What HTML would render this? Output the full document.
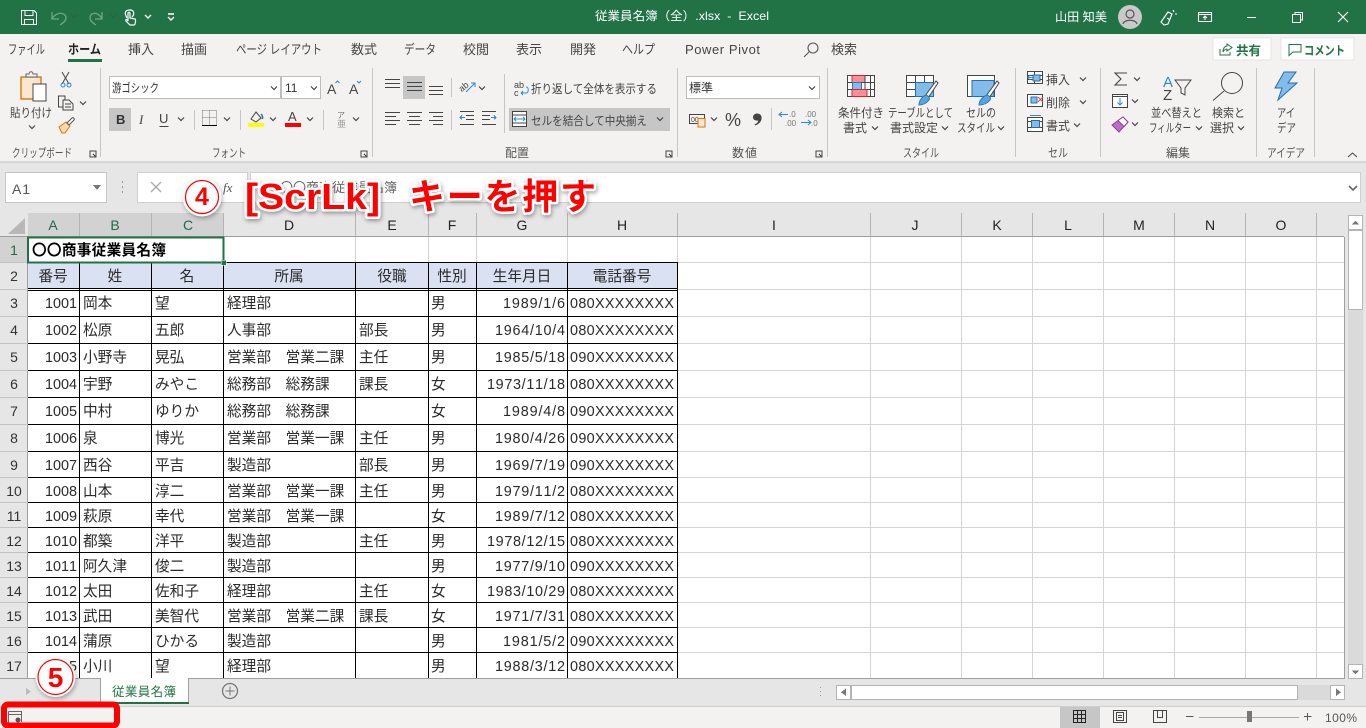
<!DOCTYPE html>
<html lang="ja"><head><meta charset="utf-8"><title>従業員名簿（全）.xlsx - Excel</title>
<style>
html,body{margin:0;padding:0;background:#fff;overflow:hidden}
svg{display:block}
text{font-family:"Liberation Sans","Noto Sans CJK JP",sans-serif;white-space:pre}
.r{font-size:12px;fill:#444}
.t{font-size:13px;fill:#444}
.g{font-size:12px;fill:#555}
.w{font-size:12px;fill:#fff}
.h{font-size:14px;fill:#222;text-anchor:middle}
.hs{font-size:14px;fill:#1f6b45;text-anchor:middle}
.n{font-size:14px;fill:#333;text-anchor:middle}
.c{font-size:14.67px;fill:#2a2a2a}
.p{font-size:14.4px;fill:#2a2a2a}
.m{font-size:14.67px;fill:#2a2a2a;text-anchor:middle}
.d{font-size:14.4px;fill:#2a2a2a;text-anchor:end;font-kerning:none}
.a{font-weight:700;fill:#f00;stroke:#fff;stroke-width:5px;paint-order:stroke;stroke-linejoin:round;filter:drop-shadow(1px 2px 2px rgba(0,0,0,.35))}
.s{fill:none;stroke:#444;stroke-width:1}
.gl{stroke:#d4d4d4;stroke-width:1}
.bl{stroke:#000;stroke-width:1}
.hd{stroke:#b4b4b4;stroke-width:1}
</style></head>
<body>
<svg xmlns="http://www.w3.org/2000/svg" width="1366" height="728" viewBox="0 0 1366 728" shape-rendering="crispEdges">
<defs>
<path id="c" d="M-3,-1.5L0,1.5L3,-1.5" fill="none" stroke="#444" stroke-width="1.2" shape-rendering="auto"/>
</defs>

<!-- backgrounds -->
<rect width="1366" height="728" fill="#e6e6e6"/>
<rect width="1366" height="34" fill="#217346"/>
<rect y="34" width="1366" height="127" fill="#f3f2f1"/>
<rect y="161" width="1366" height="2" fill="#d6d6d6"/>

<!-- title bar -->
<g fill="none" stroke="#fff" stroke-width="1.2">
<path d="M21.5,10.5H34L36.5,13V24.5H21.5Z"/><path d="M25,10.5V15.5H33V10.5M24.5,24.5V19.5H33.5V24.5"/>
</g>
<g fill="none" stroke="#6fa588" stroke-width="1.3" shape-rendering="auto">
<path d="M52,12V19H59M52,19C56,11 66,12 66,18C66,21 63,23 60,25"/>
<path d="M102,12V19H95M102,19C98,11 90,12 90,18C90,21 93,23 96,25"/>
</g>
<use href="#c" x="74" y="16" style="opacity:.4"/>
<use href="#c" x="113" y="16" style="opacity:.4"/>
<g fill="none" stroke="#fff" stroke-width="1.2" shape-rendering="auto">
<path d="M127,18C123,11 127,10 130,10C134,10 135,14 132,17"/>
<path d="M128,21V13.5C128,12 130,12 130,13.5V18L135,19C136,19 135.500,25 134,25H130L126,21C125,19 127,19 128,21Z"/>
<path d="M145,15L148,18L151,15M168,14H174M168,17L171,20L174,17" stroke-width="1.4"/>
</g>
<text class="w" x="595" y="20" textLength="174" lengthAdjust="spacingAndGlyphs">従業員名簿（全）.xlsx  -  Excel</text>
<text class="w" x="1055" y="21" textLength="52" lengthAdjust="spacingAndGlyphs">山田 知美</text>
<circle cx="1130" cy="17" r="12" fill="#c9c9c9" shape-rendering="auto"/>
<g fill="none" stroke="#555" stroke-width="1.2" shape-rendering="auto"><circle cx="1130" cy="14" r="4"/><path d="M1123,24C1124,19 1136,19 1137,24"/></g>
<g fill="none" stroke="#fff" stroke-width="1.1" shape-rendering="auto">
<path d="M1161,22L1168,12L1172,14L1168,24L1164,25ZM1167,18L1170,20M1173,10L1174,12M1175,14H1177"/>
<path d="M1198.500,12.500H1211.500V21.500H1198.500ZM1198.500,14.500H1211.500M1205,20V16M1203,18L1205,16L1207,18"/>
</g>
<g fill="none" stroke="#fff" stroke-width="1">
<path d="M1247,17.500H1256"/><path d="M1292.500,14.500H1300.500V22.500H1292.500ZM1295,14.500V12.500H1302.500V20H1300.500"/>
</g>
<path d="M1338,12L1348,22M1348,12L1338,22" stroke="#fff" stroke-width="1.2" shape-rendering="auto"/>

<!-- tabs -->
<g>
<text class="t" x="8" y="54" textLength="37" lengthAdjust="spacingAndGlyphs">ファイル</text>
<text class="t" x="68" y="54" textLength="33" lengthAdjust="spacingAndGlyphs" style="font-weight:700;fill:#222">ホーム</text>
<text class="t" x="128" y="54" textLength="26">挿入</text>
<text class="t" x="181" y="54" textLength="26">描画</text>
<text class="t" x="236" y="54" textLength="86" lengthAdjust="spacingAndGlyphs">ページ レイアウト</text>
<text class="t" x="351" y="54" textLength="26">数式</text>
<text class="t" x="404" y="54" textLength="32" lengthAdjust="spacingAndGlyphs">データ</text>
<text class="t" x="463" y="54" textLength="26">校閲</text>
<text class="t" x="516" y="54" textLength="26">表示</text>
<text class="t" x="570" y="54" textLength="26">開発</text>
<text class="t" x="622" y="54" textLength="33" lengthAdjust="spacingAndGlyphs">ヘルプ</text>
<text class="t" x="685" y="54" textLength="75">Power Pivot</text>
<text class="t" x="831" y="54" textLength="26">検索</text>
</g>
<rect x="68" y="59" width="34" height="3" fill="#217346"/>
<g fill="none" stroke="#555" stroke-width="1.1" shape-rendering="auto"><circle cx="813" cy="48" r="5"/><path d="M809,52L804,57"/></g>
<rect x="1213" y="38" width="58" height="22" fill="#fff" stroke="#e4e4e4"/>
<rect x="1281" y="38" width="73" height="22" fill="#fff" stroke="#e4e4e4"/>
<g fill="none" stroke="#217346" stroke-width="1" shape-rendering="auto">
<path d="M1220,49V55H1230V52M1223,52C1223,48 1225,46 1227,46V44L1232,47.500L1227,51V49C1225.500,49 1224,50 1223,52Z"/>
<path d="M1289,44.500H1301V52H1293L1289,55.500Z"/>
</g>
<text x="1236" y="55" textLength="25" style="font-size:12.5px;font-weight:700;fill:#217346">共有</text>
<text x="1304" y="55" textLength="41" lengthAdjust="spacingAndGlyphs" style="font-size:12.5px;font-weight:700;fill:#217346">コメント</text>

<!-- ribbon separators -->
<g stroke="#c8c6c4" stroke-width="1">
<path d="M100.500,68V157M372.500,68V157M677.500,68V157M827.500,68V157M1015.500,68V157M1100.500,68V157M1256.500,68V157M1314.500,68V157"/>
<path d="M194.500,110V130M240.500,110V130M323.500,110V130M451.500,78V97M451.500,110V130M504.500,74V133M771.500,108V130"/>
</g>

<!-- clipboard -->
<g shape-rendering="auto">
<rect x="21" y="77" width="20" height="22" fill="#fbe6cf" stroke="#d97706" stroke-width="1.4"/>
<path d="M26,77V74H29C29,71 33,71 33,74H37V77Z" fill="#f3f2f1" stroke="#666"/>
<rect x="33" y="84" width="13" height="17" fill="#fff" stroke="#444"/>
<path d="M62,72L69,84M69,72L62,84" stroke="#444" fill="none"/>
<circle cx="63" cy="85" r="2" fill="none" stroke="#2b88d8"/><circle cx="69" cy="85" r="2" fill="none" stroke="#2b88d8"/>
<path d="M58.500,96H65V107H58.500Z" fill="#f3f2f1" stroke="#444"/>
<path d="M63,100H69L73,104V110H63ZM65,104H71M65,107H71" fill="#f3f2f1" stroke="#444"/>
<path d="M59,127L66,122L70,126L65,133L62,133Z" fill="#f7d9b6" stroke="#d97706"/>
<path d="M67,123L72,118C73,117 75,119 74,120L69,125Z" fill="#fff" stroke="#555"/>
</g>
<text class="r" x="10" y="117" textLength="42" lengthAdjust="spacingAndGlyphs">貼り付け</text>
<use href="#c" x="32" y="127"/><use href="#c" x="83" y="103"/>
<text class="g" x="12" y="157" textLength="60" lengthAdjust="spacingAndGlyphs">クリップボード</text>
<path d="M90,151H96V157H90ZM93,154L96,157" class="s" stroke="#777"/>

<!-- font -->
<rect x="109.500" y="76.500" width="171" height="22" fill="#fff" stroke="#bdbdbd"/>
<rect x="281.500" y="76.500" width="39" height="22" fill="#fff" stroke="#bdbdbd"/>
<text x="112" y="92" textLength="47" lengthAdjust="spacingAndGlyphs" style="font-size:12px;fill:#333">游ゴシック</text>
<text x="285" y="92" style="font-size:12px;fill:#333">11</text>
<use href="#c" x="274" y="88"/><use href="#c" x="314" y="88"/>
<text x="327" y="94" style="font-size:14px;fill:#444">A</text><text x="349" y="94" style="font-size:14px;fill:#444">A</text>
<path d="M335.500,83L337.500,81L339.500,83M357,81L359,83L361,81" fill="none" stroke="#2b88d8" shape-rendering="auto"/>
<rect x="109" y="108" width="22" height="23" fill="#c6c6c6"/>
<text x="116" y="124" style="font-size:13px;font-weight:700;fill:#333">B</text>
<text x="139" y="124" style="font-size:13px;font-style:italic;font-family:'Liberation Serif',serif;fill:#444">I</text>
<text x="159" y="123" style="font-size:13px;fill:#444">U</text><path d="M159.500,126.500H168.500" stroke="#444"/>
<use href="#c" x="181" y="119"/><use href="#c" x="227" y="119"/><use href="#c" x="273" y="119"/><use href="#c" x="310" y="119"/><use href="#c" x="356" y="119"/>
<path d="M202.500,110.500H216.500V125M202.500,110.500V125M209.500,110.500V125M202.500,117.500H216.500" fill="none" stroke="#777" stroke-dasharray="1 1"/>
<rect x="202" y="125" width="15" height="1" fill="#000"/>
<path d="M251,119L256,112L261,118L256,122Z" fill="none" stroke="#444" shape-rendering="auto"/>
<path d="M261,114C263,116 263,118 262,119" fill="none" stroke="#2b6cb0" stroke-width="1.5" shape-rendering="auto"/>
<rect x="248" y="123" width="16" height="4" fill="#ff0"/>
<text x="288" y="121" style="font-size:13px;fill:#444">A</text><rect x="285" y="123" width="16" height="4" fill="#f00"/>
<text x="337" y="118" style="font-size:8px;fill:#777">ア</text><text x="337" y="127" style="font-size:9px;fill:#999">亜</text>
<text class="g" x="212" y="157" textLength="34" lengthAdjust="spacingAndGlyphs">フォント</text>
<path d="M361,151H367V157H361ZM364,154L367,157" class="s" stroke="#777"/>

<!-- alignment -->
<rect x="403" y="76" width="22" height="23" fill="#c6c6c6"/>
<path d="M385,79.500H400M385,83.500H400M385,87.500H400" stroke="#444" fill="none"/>
<path d="M407,82.500H422M407,86.500H422M407,90.500H422" stroke="#444"/>
<path d="M429,86.500H443M429,90.500H443M429,94.500H443" stroke="#444"/>
<path d="M385,112.500H400M385,116.500H396M385,120.500H400M385,124.500H396" stroke="#444"/>
<path d="M407,112.500H422M409,116.500H420M407,120.500H422M409,124.500H420" stroke="#444"/>
<path d="M429,112.500H443M433,116.500H443M429,120.500H443M433,124.500H443" stroke="#444"/>
<text x="459" y="91" transform="rotate(-40 462 88)" style="font-size:9px;fill:#444">ab</text>
<path d="M466,92L475,83M471,83H475V87" fill="none" stroke="#2b88d8" shape-rendering="auto"/>
<use href="#c" x="482" y="88"/>
<path d="M460,111.500H474M466,115.500H474M466,119.500H474M460,124.500H474M482,111.500H496M482,115.500H490M482,119.500H490M482,124.500H496" stroke="#444"/>
<path d="M465,117.500H460M462,115.500L460,117.500L462,119.500M491,117.500H496M494,115.500L496,117.500L494,119.500" fill="none" stroke="#2b88d8"/>
<text x="514" y="88" style="font-size:9px;fill:#444">ab</text><text x="514" y="96" style="font-size:9px;fill:#444">c</text>
<path d="M521,93H526C529,93 529,87 526,87M521,93L523,91M521,93L523,95" fill="none" stroke="#2b88d8" shape-rendering="auto"/>
<text class="r" x="531" y="93" textLength="126" lengthAdjust="spacingAndGlyphs">折り返して全体を表示する</text>
<rect x="509" y="108" width="161" height="23" fill="#c6c6c6"/>
<rect x="512.500" y="111.500" width="14" height="15" fill="#fff" stroke="#444"/>
<path d="M512.500,115H526.500M512.500,123H526.500" stroke="#444"/>
<path d="M514,119H525M516,117L514,119L516,121M523,117L525,119L523,121" fill="none" stroke="#2b88d8" shape-rendering="auto"/>
<text class="r" x="531" y="125" textLength="116" lengthAdjust="spacingAndGlyphs">セルを結合して中央揃え</text>
<use href="#c" x="660" y="119"/>
<text class="g" x="505" y="157" textLength="24">配置</text>
<path d="M666,151H672V157H666ZM669,154L672,157" class="s" stroke="#777"/>

<!-- number -->
<rect x="686.500" y="76.500" width="133" height="22" fill="#fff" stroke="#bdbdbd"/>
<text x="689" y="92" textLength="24" style="font-size:12px;fill:#333">標準</text>
<use href="#c" x="812" y="88"/>
<rect x="689.500" y="114.500" width="15" height="9" fill="none" stroke="#444"/>
<text x="691" y="122" style="font-size:7px;fill:#444">00</text>
<rect x="698" y="118.500" width="7" height="8.500" fill="#fbe6cf" stroke="#d97706" shape-rendering="auto"/>
<use href="#c" x="714" y="119"/>
<text x="725" y="126" textLength="18" style="font-size:18px;fill:#444">%</text>
<path d="M757,113.500C760.500,113.500 762,116 761.500,119C761,122 758.500,124.500 755,125.500L754.500,124.500C757,123.500 758,122 758.300,120.500C755,121 753,119.500 753,117.300C753,115 755,113.500 757,113.500Z" fill="#444" shape-rendering="auto"/>
<g style="font-size:8px;fill:#777"><text x="789" y="117">.0</text><text x="785" y="126">.00</text><text x="805" y="117">.00</text><text x="811" y="126">.0</text></g>
<path d="M779,114.500H788M782,112L779,114.500L782,117M801,122.500H811M808,120L811,122.500L808,125" fill="none" stroke="#2b88d8" shape-rendering="auto"/>
<text class="g" x="732" y="157" textLength="25">数値</text>
<path d="M816,151H822V157H816ZM819,154L822,157" class="s" stroke="#777"/>

<!-- styles -->
<g fill="none" stroke="#444">
<rect x="847.500" y="75.500" width="27" height="21" fill="#fff"/>
<rect x="852" y="75.500" width="13" height="7" fill="#f98f95" stroke="#d9232d"/>
<rect x="852.500" y="82.500" width="9" height="7" fill="#83bce8" stroke="#2b7bc0"/>
<rect x="852" y="89.500" width="15" height="7" fill="#f98f95" stroke="#d9232d"/>
<path d="M870.500,75.500V96.500M861.500,82.500H874M867,89.500H874M847.500,82.500H852M847.500,89.500H852M865,75.500V89"/>
</g>
<g fill="none" stroke="#444">
<rect x="906.500" y="75.500" width="27" height="21" fill="#fff"/>
<path d="M906.500,82.500H933.500M906.500,89.500H933.500M915.500,75.500V96.500M924.500,75.500V96.500"/>
<rect x="915.500" y="82.500" width="18" height="14" fill="#83bce8" stroke="#1e6fb8"/>
</g>
<g fill="none" stroke="#444">
<rect x="967.500" y="75.500" width="27" height="21" fill="#fff"/>
<rect x="972" y="80.500" width="22" height="16" fill="#83bce8" stroke="#1e6fb8"/>
</g>
<g shape-rendering="auto">
<path d="M925,96L936,81L938,83L928,98Z" fill="#fff" stroke="#444"/><path d="M919,105C919,100 923,96 926,95C929,96 930,98 929,100C926,104 922,105 919,105Z" fill="#5aa3dd" stroke="#2b7bc0"/>
<path d="M986,96L997,81L999,83L989,98Z" fill="#fff" stroke="#444"/><path d="M979,105C979,100 984,96 987,95C990,96 991,98 990,100C987,104 983,105 979,105Z" fill="#5aa3dd" stroke="#2b7bc0"/>
</g>
<text class="r" x="838" y="117" textLength="46" lengthAdjust="spacingAndGlyphs">条件付き</text>
<text class="r" x="843" y="132" textLength="24">書式</text><use href="#c" x="875" y="128"/>
<text class="r" x="888" y="117" textLength="65" lengthAdjust="spacingAndGlyphs">テーブルとして</text>
<text class="r" x="890" y="132" textLength="48">書式設定</text><use href="#c" x="945" y="128"/>
<text class="r" x="966" y="117" textLength="30" lengthAdjust="spacingAndGlyphs">セルの</text>
<text class="r" x="957" y="132" textLength="38" lengthAdjust="spacingAndGlyphs">スタイル</text><use href="#c" x="1001" y="128"/>
<text class="g" x="903" y="157" textLength="36" lengthAdjust="spacingAndGlyphs">スタイル</text>

<!-- cells -->
<g fill="none" stroke="#444">
<rect x="1027.500" y="71.500" width="15" height="12" fill="#fff"/><path d="M1027.500,75.500H1042.500M1027.500,79.500H1042.500M1034.500,71.500V83.500"/>
<rect x="1027.500" y="94.500" width="15" height="12" fill="#fff"/>
<rect x="1027.500" y="117.500" width="15" height="14" fill="#fff"/><path d="M1027.500,121.500H1042.500M1027.500,127.500H1042.500"/>
</g>
<rect x="1033" y="75" width="7" height="6" fill="#83bce8" stroke="#1e6fb8"/><path d="M1028,77.500H1034M1030,75L1028,77.500L1030,80" stroke="#2b88d8" fill="none" shape-rendering="auto"/>
<rect x="1031" y="97" width="6" height="6" fill="#83bce8" stroke="#1e6fb8"/><path d="M1038,97L1043,102M1043,97L1038,102" stroke="#e8414a" fill="none" shape-rendering="auto"/>
<rect x="1031.500" y="120.500" width="8" height="7" fill="#83bce8" stroke="#1e6fb8"/><path d="M1030,115.500H1041" stroke="#2b88d8"/>
<text class="r" x="1046" y="84" textLength="24">挿入</text><text class="r" x="1046" y="107" textLength="24">削除</text><text class="r" x="1046" y="130" textLength="24">書式</text>
<use href="#c" x="1083" y="79"/><use href="#c" x="1083" y="102"/><use href="#c" x="1077" y="125"/>
<text class="g" x="1048" y="157" textLength="20" lengthAdjust="spacingAndGlyphs">セル</text>

<!-- editing -->
<path d="M1127,73H1115L1121,79L1115,85H1127" fill="none" stroke="#444" stroke-width="1.1" shape-rendering="auto"/><use href="#c" x="1137" y="79"/>
<rect x="1112.500" y="94.500" width="15" height="13" fill="#fff" stroke="#444"/><path d="M1112.500,96.500H1127.500" stroke="#444"/><path d="M1120,98V105M1117.500,102.500L1120,105L1122.500,102.500" fill="none" stroke="#2b88d8" shape-rendering="auto"/><use href="#c" x="1135" y="101"/>
<path d="M1112,125L1123,117L1128,122L1119,132Z" fill="#c06bc8" stroke="#8e3e98" shape-rendering="auto"/><path d="M1118,120.500L1123,117L1128,122L1124,126.500Z" fill="#fff" stroke="#8e3e98" shape-rendering="auto"/><use href="#c" x="1135" y="124"/>
<text x="1163" y="87" style="font-size:15px;fill:#2b88d8">A</text><text x="1163" y="100" style="font-size:15px;fill:#444">Z</text>
<path d="M1175,80H1191L1185,88V95L1181,93V88Z" fill="none" stroke="#444" shape-rendering="auto"/>
<text class="r" x="1151" y="117" textLength="51" lengthAdjust="spacingAndGlyphs">並べ替えと</text>
<text class="r" x="1149" y="132" textLength="42" lengthAdjust="spacingAndGlyphs">フィルター</text><use href="#c" x="1199" y="128"/>
<g fill="none" stroke="#444" shape-rendering="auto"><circle cx="1232" cy="83" r="10.500"/><path d="M1224,91L1213,100.500"/></g>
<text class="r" x="1212" y="117" textLength="33" lengthAdjust="spacingAndGlyphs">検索と</text>
<text class="r" x="1210" y="132" textLength="24">選択</text><use href="#c" x="1241" y="128"/>
<text class="g" x="1166" y="157" textLength="24">編集</text>

<!-- ideas -->
<path d="M1284,72H1296L1288,83H1297L1278,100L1282,88H1275Z" fill="#83bce8" stroke="#1e6fb8" shape-rendering="auto"/>
<text class="r" x="1277" y="117" textLength="18" lengthAdjust="spacingAndGlyphs">アイ</text>
<text class="r" x="1277" y="132" textLength="19" lengthAdjust="spacingAndGlyphs">デア</text>
<text class="g" x="1267" y="157" textLength="38" lengthAdjust="spacingAndGlyphs">アイデア</text>
<path d="M1348,157L1352.500,153L1357,157" fill="none" stroke="#444" shape-rendering="auto"/>

<!-- formula bar -->
<rect x="5.500" y="172.500" width="101" height="30" fill="#fff" stroke="#c6c6c6"/>
<text x="12" y="194" textLength="18" style="font-size:14px;fill:#555">A1</text>
<path d="M93,185H101L97,190Z" fill="#777"/>
<path d="M122,181h1v2h-1zM122,186h1v2h-1zM122,191h1v2h-1z" fill="#999"/>
<rect x="137.500" y="172.500" width="110" height="30" fill="#fff" stroke="#d0d0d0"/>
<rect x="250.500" y="172.500" width="1110" height="30" fill="#fff" stroke="#d0d0d0"/>
<path d="M151,182L161,192M161,182L151,192" stroke="#aaa" stroke-width="1.4" shape-rendering="auto"/>
<text x="223" y="192" style="font-size:13px;font-style:italic;font-family:'Liberation Serif',serif;fill:#555">fx</text>
<text x="280" y="192" textLength="117" style="font-size:13px;fill:#666">〇〇商事従業員名簿</text>
<path d="M1349,186L1353,190L1357,186" fill="none" stroke="#666" stroke-width="1.6" shape-rendering="auto"/>

<!-- sheet -->
<rect x="28" y="237" width="1316" height="441" fill="#fff"/>
<rect x="0" y="213" width="1344" height="24" fill="#e6e6e6"/>
<rect x="28" y="213" width="195" height="24" fill="#d2d2d2"/>
<rect x="0" y="237" width="28" height="26" fill="#d2d2d2"/>
<path d="M8,234L25,218V234Z" fill="#b8b8b8" shape-rendering="auto"/>
<rect x="0" y="236" width="1344" height="1" fill="#9e9e9e"/>
<rect x="27" y="237" width="1" height="441" fill="#9e9e9e"/>
<rect x="1344" y="237" width="1" height="441" fill="#9e9e9e"/>
<rect x="28" y="678" width="1317" height="1" fill="#9e9e9e"/>

<g class="hd"><path d="M79.500,213V236M151.500,213V236M223.500,213V236M355.500,213V236M428.500,213V236M476.500,213V236M567.500,213V236M677.500,213V236M870.500,213V236M961.500,213V236M1032.500,213V236M1103.500,213V236M1174.500,213V236M1245.500,213V236M1316.500,213V236"/></g>
<path d="M0,262.500H28M0,289.500H28M0,316.500H28M0,343.500H28M0,370.500H28M0,397.500H28M0,424.500H28M0,451.500H28M0,477.500H28M0,502.500H28M0,527.500H28M0,552.500H28M0,577.500H28M0,602.500H28M0,627.500H28M0,652.500H28" stroke="#c4c4c4"/>

<!-- light gridlines -->
<path class="gl" d="M677,262.500H1344M677,289.500H1344M677,316.500H1344M677,343.500H1344M677,370.500H1344M677,397.500H1344M677,424.500H1344M677,451.500H1344M677,477.500H1344M677,502.500H1344M677,527.500H1344M677,552.500H1344M677,577.500H1344M677,602.500H1344M677,627.500H1344M677,652.500H1344"/>
<path class="gl" d="M870.500,237V678M961.500,237V678M1032.500,237V678M1103.500,237V678M1174.500,237V678M1245.500,237V678M1316.500,237V678M355.500,237V262M428.500,237V262M476.500,237V262M567.500,237V262M677.500,237V262"/>

<!-- table -->
<rect x="28" y="263" width="650" height="25" fill="#d9e1f2"/>
<path class="bl" d="M28,262.500H678M28,288.500H678M28,290.500H678M28,316.500H678M28,343.500H678M28,370.500H678M28,397.500H678M28,424.500H678M28,451.500H678M28,477.500H678M28,502.500H678M28,527.500H678M28,552.500H678M28,577.500H678M28,602.500H678M28,627.500H678M28,652.500H678"/>
<path class="bl" d="M79.500,262V678M151.500,262V678M223.500,262V678M355.500,262V678M428.500,262V678M476.500,262V678M567.500,262V678M677.500,262V678"/>

<!-- column heads -->
<text class="hs" x="53" y="230">A</text><text class="hs" x="115" y="230">B</text><text class="hs" x="188" y="230">C</text>
<text class="h" x="289" y="230">D</text><text class="h" x="392" y="230">E</text><text class="h" x="452" y="230">F</text><text class="h" x="522" y="230">G</text><text class="h" x="622" y="230">H</text>
<text class="h" x="774" y="230">I</text><text class="h" x="915" y="230">J</text><text class="h" x="997" y="230">K</text><text class="h" x="1068" y="230">L</text><text class="h" x="1139" y="230">M</text><text class="h" x="1210" y="230">N</text><text class="h" x="1281" y="230">O</text>

<!-- row heads -->
<text class="hs" x="14" y="255">1</text>
<text class="n" x="14" y="281">2</text><text class="n" x="14" y="308">3</text><text class="n" x="14" y="335">4</text><text class="n" x="14" y="362">5</text><text class="n" x="14" y="389">6</text><text class="n" x="14" y="416">7</text><text class="n" x="14" y="443">8</text><text class="n" x="14" y="470">9</text><text class="n" x="14" y="496">10</text><text class="n" x="14" y="521">11</text><text class="n" x="14" y="546">12</text><text class="n" x="14" y="571">13</text><text class="n" x="14" y="596">14</text><text class="n" x="14" y="621">15</text><text class="n" x="14" y="646">16</text><text class="n" x="14" y="671">17</text>

<!-- title + header row -->
<text x="32" y="255" textLength="134" style="font-size:14.67px;font-weight:700;fill:#000">〇〇商事従業員名簿</text>
<g>
<text class="m" x="53" y="281">番号</text><text class="m" x="115" y="281">姓</text><text class="m" x="187" y="281">名</text><text class="m" x="289" y="281">所属</text><text class="m" x="392" y="281">役職</text><text class="m" x="452" y="281">性別</text><text class="m" x="522" y="281">生年月日</text><text class="m" x="622" y="281">電話番号</text>
</g>

<!-- rows -->
<text class="d" x="77" y="308">1001</text><text class="c" x="83" y="308">岡本</text><text class="c" x="155" y="308">望</text><text class="c" x="227" y="308">経理部</text><text class="c" x="431" y="308">男</text><text class="d" x="565" y="308" textLength="62">1989/1/6</text><text class="p" x="570" y="308" textLength="104">080XXXXXXXX</text>
<text class="d" x="77" y="335">1002</text><text class="c" x="83" y="335">松原</text><text class="c" x="155" y="335">五郎</text><text class="c" x="227" y="335">人事部</text><text class="c" x="359" y="335">部長</text><text class="c" x="431" y="335">男</text><text class="d" x="565" y="335" textLength="70">1964/10/4</text><text class="p" x="570" y="335" textLength="104">080XXXXXXXX</text>
<text class="d" x="77" y="362">1003</text><text class="c" x="83" y="362">小野寺</text><text class="c" x="155" y="362">晃弘</text><text class="c" x="227" y="362">営業部　営業二課</text><text class="c" x="359" y="362">主任</text><text class="c" x="431" y="362">男</text><text class="d" x="565" y="362" textLength="70">1985/5/18</text><text class="p" x="570" y="362" textLength="104">090XXXXXXXX</text>
<text class="d" x="77" y="389">1004</text><text class="c" x="83" y="389">宇野</text><text class="c" x="155" y="389">みやこ</text><text class="c" x="227" y="389">総務部　総務課</text><text class="c" x="359" y="389">課長</text><text class="c" x="431" y="389">女</text><text class="d" x="565" y="389" textLength="78">1973/11/18</text><text class="p" x="570" y="389" textLength="104">080XXXXXXXX</text>
<text class="d" x="77" y="416">1005</text><text class="c" x="83" y="416">中村</text><text class="c" x="155" y="416">ゆりか</text><text class="c" x="227" y="416">総務部　総務課</text><text class="c" x="431" y="416">女</text><text class="d" x="565" y="416" textLength="62">1989/4/8</text><text class="p" x="570" y="416" textLength="104">090XXXXXXXX</text>
<text class="d" x="77" y="443">1006</text><text class="c" x="83" y="443">泉</text><text class="c" x="155" y="443">博光</text><text class="c" x="227" y="443">営業部　営業一課</text><text class="c" x="359" y="443">主任</text><text class="c" x="431" y="443">男</text><text class="d" x="565" y="443" textLength="70">1980/4/26</text><text class="p" x="570" y="443" textLength="104">090XXXXXXXX</text>
<text class="d" x="77" y="470">1007</text><text class="c" x="83" y="470">西谷</text><text class="c" x="155" y="470">平吉</text><text class="c" x="227" y="470">製造部</text><text class="c" x="359" y="470">部長</text><text class="c" x="431" y="470">男</text><text class="d" x="565" y="470" textLength="70">1969/7/19</text><text class="p" x="570" y="470" textLength="104">090XXXXXXXX</text>
<text class="d" x="77" y="496">1008</text><text class="c" x="83" y="496">山本</text><text class="c" x="155" y="496">淳二</text><text class="c" x="227" y="496">営業部　営業一課</text><text class="c" x="359" y="496">主任</text><text class="c" x="431" y="496">男</text><text class="d" x="565" y="496" textLength="70">1979/11/2</text><text class="p" x="570" y="496" textLength="104">080XXXXXXXX</text>
<text class="d" x="77" y="521">1009</text><text class="c" x="83" y="521">萩原</text><text class="c" x="155" y="521">幸代</text><text class="c" x="227" y="521">営業部　営業一課</text><text class="c" x="431" y="521">女</text><text class="d" x="565" y="521" textLength="70">1989/7/12</text><text class="p" x="570" y="521" textLength="104">080XXXXXXXX</text>
<text class="d" x="77" y="546">1010</text><text class="c" x="83" y="546">都築</text><text class="c" x="155" y="546">洋平</text><text class="c" x="227" y="546">製造部</text><text class="c" x="359" y="546">主任</text><text class="c" x="431" y="546">男</text><text class="d" x="565" y="546" textLength="78">1978/12/15</text><text class="p" x="570" y="546" textLength="104">080XXXXXXXX</text>
<text class="d" x="77" y="571">1011</text><text class="c" x="83" y="571">阿久津</text><text class="c" x="155" y="571">俊二</text><text class="c" x="227" y="571">製造部</text><text class="c" x="431" y="571">男</text><text class="d" x="565" y="571" textLength="70">1977/9/10</text><text class="p" x="570" y="571" textLength="104">090XXXXXXXX</text>
<text class="d" x="77" y="596">1012</text><text class="c" x="83" y="596">太田</text><text class="c" x="155" y="596">佐和子</text><text class="c" x="227" y="596">経理部</text><text class="c" x="359" y="596">主任</text><text class="c" x="431" y="596">女</text><text class="d" x="565" y="596" textLength="78">1983/10/29</text><text class="p" x="570" y="596" textLength="104">080XXXXXXXX</text>
<text class="d" x="77" y="621">1013</text><text class="c" x="83" y="621">武田</text><text class="c" x="155" y="621">美智代</text><text class="c" x="227" y="621">営業部　営業二課</text><text class="c" x="359" y="621">課長</text><text class="c" x="431" y="621">女</text><text class="d" x="565" y="621" textLength="70">1971/7/31</text><text class="p" x="570" y="621" textLength="104">080XXXXXXXX</text>
<text class="d" x="77" y="646">1014</text><text class="c" x="83" y="646">蒲原</text><text class="c" x="155" y="646">ひかる</text><text class="c" x="227" y="646">製造部</text><text class="c" x="431" y="646">男</text><text class="d" x="565" y="646" textLength="62">1981/5/2</text><text class="p" x="570" y="646" textLength="104">090XXXXXXXX</text>
<text class="d" x="77" y="671">1015</text><text class="c" x="83" y="671">小川</text><text class="c" x="155" y="671">望</text><text class="c" x="227" y="671">経理部</text><text class="c" x="431" y="671">男</text><text class="d" x="565" y="671" textLength="70">1988/3/12</text><text class="p" x="570" y="671" textLength="104">080XXXXXXXX</text>

<!-- selection -->
<rect x="28" y="237.500" width="195.500" height="25" fill="none" stroke="#217346" stroke-width="2"/>
<rect x="221" y="260" width="5" height="5" fill="#217346" stroke="#fff" stroke-width=".5"/>

<!-- vertical scrollbar -->
<rect x="1345" y="213" width="21" height="493" fill="#e6e6e6"/>
<rect x="1348" y="215" width="15" height="463" fill="#dadada"/>
<rect x="1348.500" y="215.500" width="14" height="14" fill="#fff" stroke="#b4b4b4"/>
<path d="M1352,224.500H1359L1355.500,220.500Z" fill="#777"/>
<rect x="1348.500" y="230.500" width="14" height="79" fill="#fff" stroke="#b4b4b4"/>
<rect x="1348.500" y="664.500" width="14" height="14" fill="#fff" stroke="#b4b4b4"/>
<path d="M1352,670.500H1359L1355.500,674.500Z" fill="#777"/>

<!-- sheet tabs -->
<rect x="0" y="679" width="1366" height="27" fill="#e6e6e6"/>
<path d="M0,678.500H100" stroke="#a0a0a0"/>
<path d="M31,691.500L26,688V695Z" fill="#bbb"/>
<path d="M100.500,678V703H188.500V678" fill="#fff" stroke="#a0a0a0"/>
<rect x="101" y="679" width="87" height="23" fill="#fff"/>
<text x="112" y="696" textLength="64" style="font-size:12.5px;fill:#217346">従業員名簿</text>
<circle cx="230" cy="691" r="7.500" fill="none" stroke="#777" stroke-width="1.3" shape-rendering="auto"/>
<path d="M230,686.500V695.500M225.500,691H234.500" stroke="#777" stroke-width="1.3"/>
<path d="M820,687h1v1h-1zM820,691h1v1h-1zM820,695h1v1h-1z" fill="#999"/>
<rect x="836.500" y="685.500" width="14" height="14" fill="#fff" stroke="#b4b4b4"/>
<path d="M846,688.500V696L841,692.300Z" fill="#777"/>
<rect x="851" y="685" width="480" height="15" fill="#dadada"/>
<rect x="851.500" y="685.500" width="446" height="14" fill="#fff" stroke="#b4b4b4"/>
<rect x="1330.500" y="685.500" width="14" height="14" fill="#fff" stroke="#b4b4b4"/>
<path d="M1336,688.500V696L1341,692.300Z" fill="#777"/>

<!-- status bar -->
<rect x="0" y="706" width="1366" height="22" fill="#f3f2f1"/>
<rect x="0" y="706" width="1366" height="1" fill="#cfcfcf"/>
<rect x="101" y="702" width="88" height="2" fill="#217346"/>
<path d="M8.500,711.500H21.500V722M8.500,711.500V723M8.500,714.500H21.500" fill="none" stroke="#666"/>
<circle cx="18" cy="720" r="2.500" fill="#555" shape-rendering="auto"/>
<rect x="1060" y="707" width="40" height="21" fill="#c6c6c6"/>
<path d="M1073.500,710.500H1085.500V722.500H1073.500ZM1077.500,710.500V722.500M1081.500,710.500V722.500M1073.500,714.500H1085.500M1073.500,718.500H1085.500" fill="none" stroke="#222"/>
<path d="M1113.500,710.500H1126.500V722.500H1113.500ZM1116.500,712.500H1123.500V720.500H1116.500ZM1118,715.500H1122M1118,717.500H1122" fill="none" stroke="#444"/>
<path d="M1153.500,710.500H1166.500V722.500H1153.500ZM1157.500,710.500V717.500H1162.500V710.500" fill="none" stroke="#444"/>
<path d="M1186,716.500H1193.500M1304,716.500H1311.500M1307.500,713V720.500" stroke="#555"/>
<path d="M1199,717.500H1299" stroke="#a8a8a8"/>
<rect x="1247" y="711" width="5" height="11" fill="#777"/>
<text x="1325" y="722" textLength="32" style="font-size:12px;fill:#555">100%</text>

<!-- annotations -->
<g shape-rendering="auto">
<circle cx="202" cy="197" r="19.500" fill="#fff" style="filter:drop-shadow(1px 2px 2px rgba(0,0,0,.3))"/>
<circle cx="202" cy="197" r="16.500" fill="none" stroke="#f00" stroke-width="1.2"/>
<text x="202" y="205" text-anchor="middle" style="font-size:25px;font-weight:700;fill:#f00">4</text>
<text class="a" x="245" y="209" textLength="135" lengthAdjust="spacingAndGlyphs" style="font-size:36px">[ScrLk]</text>
<text class="a" x="409" y="209" textLength="187" style="font-size:36px">キーを押す</text>
<circle cx="55.500" cy="677" r="20" fill="#fff" style="filter:drop-shadow(1px 2px 2px rgba(0,0,0,.3))"/>
<circle cx="55.500" cy="677" r="17.500" fill="none" stroke="#f00" stroke-width="1.2"/>
<text x="55.500" y="687" text-anchor="middle" style="font-size:28px;font-weight:700;fill:#f00">5</text>
<rect x="4" y="704.500" width="113" height="21" rx="4" fill="none" stroke="#f00" stroke-width="6"/>
</g>
</svg>
</body></html>
